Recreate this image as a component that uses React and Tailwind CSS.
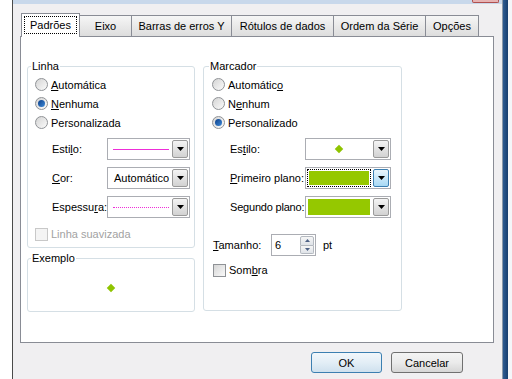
import React from "react";

const Arrow = ({ color = "#000" }) => (
  <svg width="7" height="4" viewBox="0 0 7 4"><polygon points="0,0 7,0 3.5,4" fill={color} /></svg>
);

const ArrowBtn = ({ hot }) => (
  <div
    className={
      "w-[16px] h-full flex items-center justify-center rounded-[2px] border " +
      (hot
        ? "border-[#3c7fb1] bg-gradient-to-b from-[#eaf6fd] to-[#a7d9f5]"
        : "border-[#9a9a9a] bg-gradient-to-b from-[#f4f4f4] to-[#d2d2d2]")
    }
  >
    <Arrow />
  </div>
);

const Combo = ({ w, children, hot }) => (
  <div className={"flex shrink-0 h-[22px] border border-[#abadb3] bg-white p-px " + w}>
    <div className="flex-1 flex items-center pr-[2px]">{children}</div>
    <ArrowBtn hot={hot} />
  </div>
);

const Radio = ({ checked, children }) => (
  <div className="flex items-center h-[19px] whitespace-nowrap">
    <span className="w-[13px] h-[13px] rounded-full border border-[#8f9296] bg-gradient-to-br from-[#d4d4d4] to-[#fbfbfb] flex items-center justify-center">
      {checked && <span className="w-[7px] h-[7px] rounded-full bg-gradient-to-br from-[#0a3f8a] to-[#3f8ad8]" />}
    </span>
    <span className="ml-[3px]">{children}</span>
  </div>
);

const Check = ({ disabled, children }) => (
  <div className={"flex items-center h-[16px] whitespace-nowrap " + (disabled ? "text-[#a2a2a2]" : "")}>
    <span
      className={
        "w-[13px] h-[13px] border " +
        (disabled ? "border-[#c8c8c8] bg-[#f4f4f4]" : "border-[#8f9296] bg-gradient-to-br from-[#d6d6d6] to-[#fafafa]")
      }
    />
    <span className="ml-[3px]">{children}</span>
  </div>
);

const Diamond = () => <span className="w-[6px] h-[6px] rotate-45 bg-[#8fc400] block" />;

const Tab = ({ w, children }) => (
  <div
    className={
      "h-[21px] -ml-px border border-b-0 border-[#898c95] bg-gradient-to-b from-[#f6f6f6] to-[#dddddd] flex items-center justify-center whitespace-nowrap " +
      w
    }
  >
    {children}
  </div>
);

export default function App() {
  return (
    <div className="w-[512px] h-[379px] flex bg-white text-[11px] leading-[14px] text-black font-['Liberation_Sans',Arial,sans-serif] overflow-hidden">
      <div className="w-[12px] bg-white" />
      <div className="w-px bg-[#4a4a4a]" />
      <div className="w-[489px] flex flex-col">
        <div className="h-[4px] bg-[#c8d8eb] flex justify-end pr-[3px]">
          <div className="w-[27px] h-[3px] border-x border-b border-[#b0504f] bg-[#e7b3b3] rounded-b-[2px]" />
        </div>
        <div className="flex-1 bg-[#f0eff1] pt-[9px] px-[7px] flex flex-col">
          {/* tabs */}
          <div className="h-[23px] flex items-end pl-px">
            <div className="h-[24px] w-[59px] -mb-px relative z-10 bg-white border border-b-0 border-[#898c95] flex justify-center pt-[2px]">
              <span className="h-[18px] w-[53px] border border-dotted border-black flex items-center justify-center">Padrões</span>
            </div>
            <Tab w="w-[53px]">Eixo</Tab>
            <Tab w="w-[101px]">Barras de erros Y</Tab>
            <Tab w="w-[103px]">Rótulos de dados</Tab>
            <Tab w="w-[93px]">Ordem da Série</Tab>
            <Tab w="w-[54px]">Opções</Tab>
          </div>
          {/* panel */}
          <div className="w-[474px] h-[307px] border border-[#898c95] bg-white pl-[6px] pt-[22px] flex">
            <div className="w-[168px] flex flex-col">
              <fieldset className="border border-[#d5dfe5] rounded-[3px] p-0 m-0">
                <legend className="ml-[3px] px-px leading-[14px]">Linha</legend>
                <div className="pl-[7px] pt-[2px] pb-[5px]">
                  <Radio><u>A</u>utomática</Radio>
                  <Radio checked><u>N</u>enhuma</Radio>
                  <Radio>Personalizada</Radio>
                  <div className="flex items-center mt-[6px] ml-[17px]">
                    <span className="w-[55px] shrink-0 whitespace-nowrap">Esti<u>l</u>o:</span>
                    <Combo w="w-[83px]">
                      <span className="block ml-[4px] w-[56px] h-px bg-[#ee2ed8]" />
                    </Combo>
                  </div>
                  <div className="flex items-center mt-[7px] ml-[17px]">
                    <span className="w-[55px] shrink-0 whitespace-nowrap"><u>C</u>or:</span>
                    <Combo w="w-[83px]">
                      <span className="ml-[5px] whitespace-nowrap">Automático</span>
                    </Combo>
                  </div>
                  <div className="flex items-center mt-[7px] ml-[17px]">
                    <span className="w-[55px] shrink-0 whitespace-nowrap">Espessu<u>r</u>a:</span>
                    <Combo w="w-[83px]">
                      <span className="block ml-[4px] w-[56px] border-t border-dotted border-[#ee2ed8]" />
                    </Combo>
                  </div>
                  <div className="mt-[8px]">
                    <Check disabled>Linha suavizada</Check>
                  </div>
                </div>
              </fieldset>
              <fieldset className="mt-[3px] border border-[#d5dfe5] rounded-[3px] p-0 m-0">
                <legend className="ml-[3px] px-px leading-[14px]">Exemplo</legend>
                <div className="h-[46px] flex items-center justify-center">
                  <Diamond />
                </div>
              </fieldset>
            </div>
            <fieldset className="ml-[8px] w-[199px] h-[252px] border border-[#d5dfe5] rounded-[3px] p-0 m-0">
              <legend className="ml-[5px] px-px leading-[14px]">Marcador</legend>
              <div className="pl-[8px] pt-[2px]">
                <Radio>Automátic<u>o</u></Radio>
                <Radio>N<u>e</u>nhum</Radio>
                <Radio checked>Personalizado</Radio>
                <div className="flex items-center mt-[6px] ml-[18px]">
                  <span className="w-[75px] shrink-0 whitespace-nowrap">Es<u>t</u>ilo:</span>
                  <Combo w="w-[86px]">
                    <div className="flex-1 flex justify-center"><Diamond /></div>
                  </Combo>
                </div>
                <div className="flex items-center mt-[7px] ml-[18px]">
                  <span className="w-[75px] shrink-0 whitespace-nowrap"><u>P</u>rimeiro plano:</span>
                  <Combo w="w-[86px]" hot>
                    <div className="flex-1 h-full border border-dotted border-black p-px">
                      <div className="w-full h-full bg-[#95c800]" />
                    </div>
                  </Combo>
                </div>
                <div className="flex items-center mt-[7px] ml-[18px]">
                  <span className="w-[75px] shrink-0 whitespace-nowrap tracking-[-0.2px]">Se<u>g</u>undo plano:</span>
                  <Combo w="w-[86px]">
                    <div className="flex-1 h-full p-px">
                      <div className="w-full h-full bg-[#95c800]" />
                    </div>
                  </Combo>
                </div>
                <div className="flex items-center mt-[16px] ml-px">
                  <span className="w-[58px] shrink-0 whitespace-nowrap"><u>T</u>amanho:</span>
                  <div className="w-[45px] h-[22px] border border-[#abadb3] bg-white flex items-center">
                    <span className="flex-1 pl-[3px]">6</span>
                    <div className="w-[14px] h-[18px] mr-px flex flex-col">
                      <div className="flex-1 border border-[#b4b9c0] rounded-t-[2px] bg-gradient-to-b from-[#f6f6f6] to-[#dfe3e8] flex items-center justify-center">
                        <svg width="5" height="3" viewBox="0 0 5 3"><polygon points="0,3 5,3 2.5,0" fill="#4d6185" /></svg>
                      </div>
                      <div className="flex-1 border border-t-0 border-[#b4b9c0] rounded-b-[2px] bg-gradient-to-b from-[#f6f6f6] to-[#dfe3e8] flex items-center justify-center">
                        <svg width="5" height="3" viewBox="0 0 5 3"><polygon points="0,0 5,0 2.5,3" fill="#4d6185" /></svg>
                      </div>
                    </div>
                  </div>
                  <span className="ml-[7px]">pt</span>
                </div>
                <div className="mt-[6px] ml-px">
                  <Check>Som<u>b</u>ra</Check>
                </div>
              </div>
            </fieldset>
          </div>
          {/* buttons */}
          <div className="mt-[9px] flex justify-end pr-[32px] gap-[9px]">
            <div className="w-[71px] h-[21px] rounded-[3px] border border-[#3c7fb1] bg-gradient-to-b from-[#f2f7fb] via-[#e3eef6] to-[#cfe1ee] flex items-center justify-center">OK</div>
            <div className="w-[72px] h-[21px] rounded-[3px] border border-[#707070] bg-gradient-to-b from-[#f4f4f4] via-[#ebebeb] to-[#d6d6d6] flex items-center justify-center">Cancelar</div>
          </div>
        </div>
      </div>
      <div className="w-px bg-[#8a98a8]" />
      <div className="w-[5px] bg-gradient-to-r from-[#2e5c92] to-[#173e6e]" />
      <div className="flex-1 bg-[#f4f6f9]" />
    </div>
  );
}
